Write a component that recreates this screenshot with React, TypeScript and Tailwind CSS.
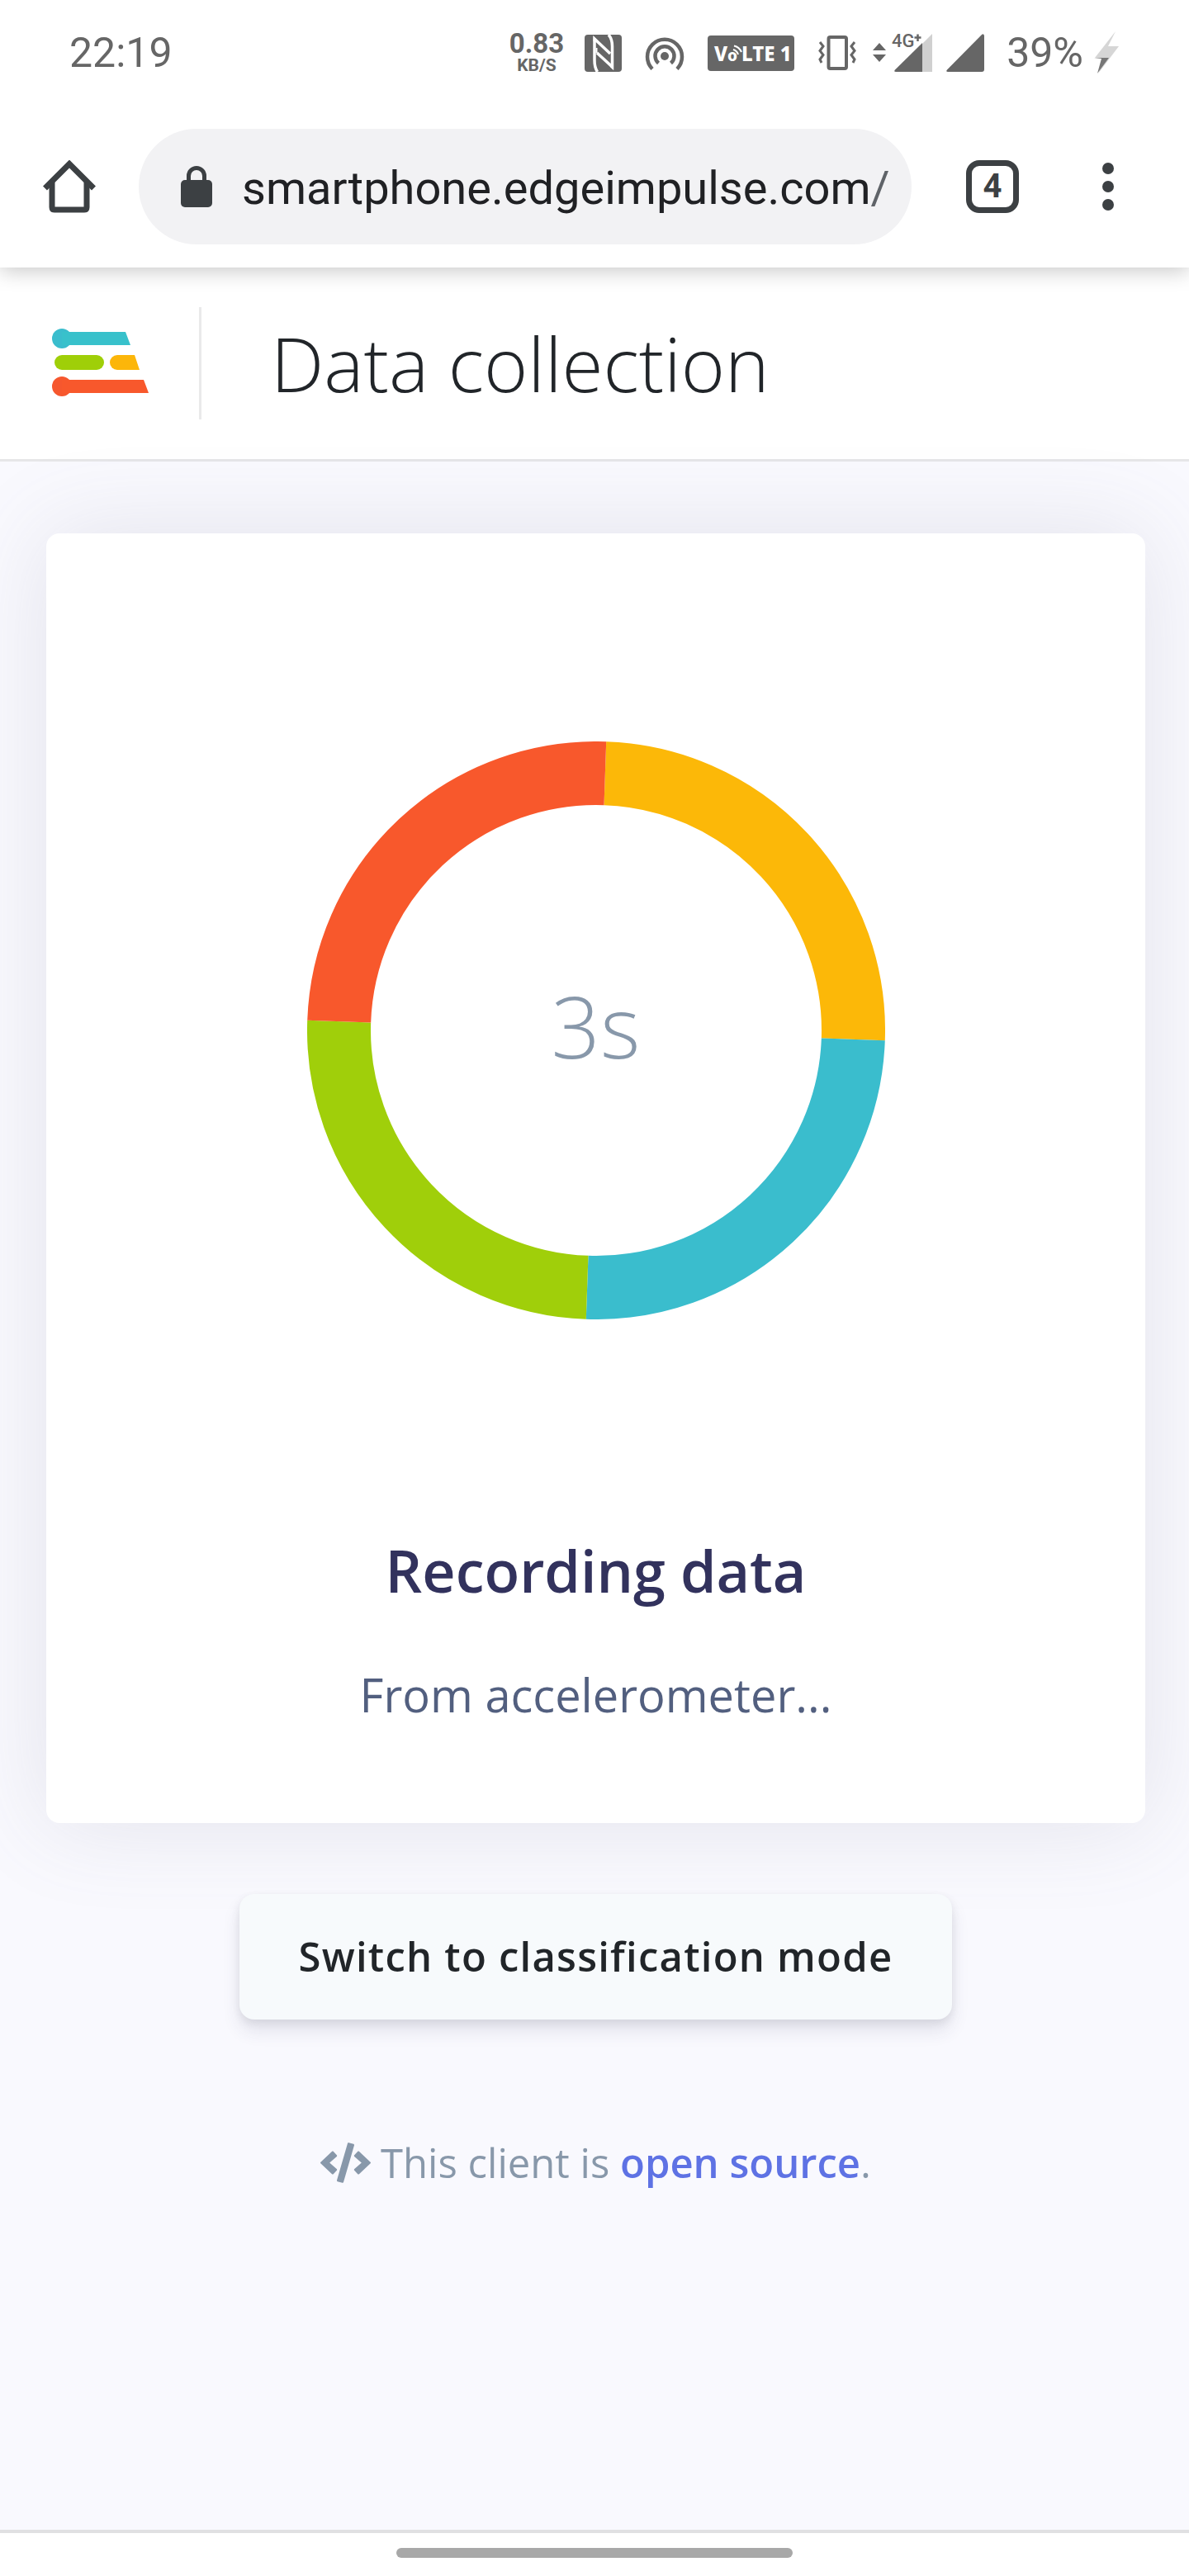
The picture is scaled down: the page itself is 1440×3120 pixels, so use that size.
import { FaCode } from "react-icons/fa";

const statusGray = "#666666";

function NfcIcon() {
  return (
    <svg viewBox="0 0 45 45" className="h-[45px] w-[45px]" aria-label="NFC">
      <rect width="45" height="45" rx="4" fill={statusGray} />
      <g fill="none" stroke="#fff" strokeWidth="3.500">
        <path d="M15.500 45 C12.800 41 12 37 12 31 V5 L31 23" />
        <path d="M29 0 C32.500 4 33.500 8 33.500 14 V39 L15 22" />
        <path d="M14.500 16 V22" strokeWidth="2" />
      </g>
      <path d="M11 2 L14 5 L12 8 L10.500 8 Z M35 43 L31 39 L34 36 Z" fill="#fff" />
    </svg>
  );
}

function HotspotIcon() {
  return (
    <svg viewBox="0 0 48 42" className="h-[42px] w-12" aria-label="Hotspot" fill="none" stroke={statusGray} strokeWidth="4.500">
      <circle cx="24" cy="25" r="5" fill={statusGray} stroke="none" />
      <path d="M16.500 33.500 A11.500 11.500 0 1 1 31.500 33.500" />
      <path d="M9 40.500 A21 21 0 1 1 39 40.500" />
    </svg>
  );
}

function VibrateIcon() {
  return (
    <svg viewBox="0 0 46 42" className="h-[42px] w-[46px]" aria-label="Vibrate" fill="none" stroke={statusGray}>
      <rect x="12.500" y="2" width="21.500" height="38" rx="2" strokeWidth="4" />
      <path d="M2 8 L6 13 L2 18.500 L6 23.500 L2 29 L4 33" strokeWidth="3" />
      <path d="M44 8 L40 13 L44 18.500 L40 23.500 L44 29 L42 33" strokeWidth="3" />
    </svg>
  );
}

function MobileDataIcon() {
  return (
    <svg viewBox="0 -6 73 60" className="h-[60px] w-[73px] overflow-visible" aria-label="4G+">
      <path d="M0 21 L8 12 L16 21 Z M0 26 L8 35 L16 26 Z" fill={statusGray} />
      <path d="M72 1 V47 H60 V13 Z" fill="#d0d0d0" />
      <path d="M60 12 V47 H28 Q25 47 27 44.500 Z" fill={statusGray} />
      <text x="23" y="17" fontFamily="Roboto" fontWeight="500" fontSize="22" fill={statusGray}>4G</text>
      <path d="M54.500 1.500 V10 M50.500 5.500 H58.500" stroke={statusGray} strokeWidth="2.500" />
    </svg>
  );
}

function SignalIcon() {
  return (
    <svg viewBox="0 0 46 46" className="h-[46px] w-[46px]" aria-label="Signal">
      <path d="M46 2 V43 Q46 46 43 46 H2 Q-1 46 1 43.500 L43 1 Q45 -1 46 2 Z" fill={statusGray} />
    </svg>
  );
}

function BoltIcon() {
  return (
    <svg viewBox="0 0 32 52" className="h-[52px] w-8" aria-label="Charging">
      <path d="M27 0 L2 32 H15 L6 51 L31 18 H18 Z" fill="#d6d6d6" />
      <path d="M1 32 H19 L5 51 L10 33 Z" fill="#777" />
    </svg>
  );
}

function VolteBadge() {
  return (
    <svg viewBox="0 0 106 44" className="h-11 w-[106px]" aria-label="VoLTE 1">
      <rect width="105" height="43" y="1" rx="4" fill={statusGray} />
      <g fontFamily="Noto Sans" fontWeight="800" fill="#fff">
        <text x="8" y="32" fontSize="24">V</text>
        <text x="24" y="32" fontSize="19">o</text>
        <text x="41" y="32" fontSize="24">LTE 1</text>
      </g>
      <g fill="none" stroke="#fff" strokeWidth="2">
        <path d="M31 18 A9 9 0 0 1 37 24" />
        <path d="M32 13.500 A13 13 0 0 1 41 21" />
      </g>
    </svg>
  );
}

function StatusBar() {
  return (
    <div className="flex h-32 items-center justify-between px-[84px] text-[50px] leading-none text-[#666666]">
      <span>22:19</span>
      <div className="flex items-center">
        <div className="flex flex-col items-center font-bold">
          <span className="text-[33px] leading-[30px]">0.83</span>
          <span className="text-[21px] leading-[22px]">KB/S</span>
        </div>
        <div className="ml-[25px] flex items-center gap-7">
          <NfcIcon />
          <HotspotIcon />
          <VolteBadge />
          <VibrateIcon />
        </div>
        <div className="ml-5 flex items-center gap-4">
          <MobileDataIcon />
          <SignalIcon />
        </div>
        <span className="ml-[27px]">39%</span>
        <span className="ml-3">
          <BoltIcon />
        </span>
      </div>
    </div>
  );
}

function BrowserBar() {
  return (
    <div className="flex h-[196px] items-center pl-[52px]">
      <button aria-label="Home">
        <svg viewBox="0 0 64 64" className="h-16 w-16" fill="none" stroke="#3c4043" strokeWidth="7">
          <path d="M2.500 34 L32 4.500 L61.500 34" />
          <path d="M11 27 V57 Q11 60 14 60 H50 Q53 60 53 57 V27" />
        </svg>
      </button>
      <label className="ml-[52px] flex h-[140px] min-w-0 flex-1 items-center rounded-full bg-[#f2f2f4] pl-[51px] text-[56px]">
        <svg viewBox="0 0 38 50" className="h-[50px] w-[38px] shrink-0" aria-hidden="true">
          <rect y="17" width="38" height="33" rx="5" fill="#3c4043" />
          <path d="M9.500 18 V12 A9.500 9.500 0 0 1 28.500 12 V18" fill="none" stroke="#3c4043" strokeWidth="5" />
        </svg>
        <input
          type="text"
          aria-label="Address"
          defaultValue="smartphone.edgeimpulse.com"
          className="ml-9 field-sizing-content pt-1 text-[#202124] outline-none"
        />
        <span className="pt-1 text-[#5f6368]">/</span>
      </label>
      <button
        aria-label="Open tabs"
        className="ml-[66px] flex h-16 w-16 items-center justify-center rounded-2xl border-[7px] border-[#3c4043] text-[40px] leading-none font-bold text-[#3c4043]"
      >
        4
      </button>
      <button aria-label="More options" className="mr-[91px] ml-[101px]">
        <svg viewBox="0 0 14 58" className="h-[58px] w-[14px]" fill="#3c4043">
          <circle cx="7" cy="7" r="7" />
          <circle cx="7" cy="29" r="7" />
          <circle cx="7" cy="51" r="7" />
        </svg>
      </button>
    </div>
  );
}

function Logo() {
  return (
    <svg viewBox="0 0 118 84" className="h-[84px] w-[118px]" aria-label="Edge Impulse">
      <circle cx="12" cy="12" r="12" fill="#3abdcd" />
      <path d="M12 4 H89 L95 20 H12 Z" fill="#38c1cb" />
      <rect x="3" y="32" width="60" height="18" rx="9" fill="#9fcf08" />
      <path d="M79 32 H100 L106 50 H79 A9 9 0 0 1 79 32 Z" fill="#fcb60a" />
      <circle cx="12" cy="70" r="12" fill="#f6572e" />
      <path d="M12 62 H111 L117 78 H12 Z" fill="#f8582c" />
    </svg>
  );
}

function ProgressRing() {
  return (
    <div className="grid place-items-center">
      <svg viewBox="-350 -350 700 700" className="col-start-1 row-start-1 w-[700px] max-w-full" aria-hidden="true">
        <g fill="none" strokeWidth="77" transform="rotate(2)">
          <path d="M0 -311.500 A311.500 311.500 0 0 1 311.500 0" stroke="#fcb808" />
          <path d="M311.500 0 A311.500 311.500 0 0 1 0 311.500" stroke="#3abdcd" />
          <path d="M0 311.500 A311.500 311.500 0 0 1 -311.500 0" stroke="#a0cf0a" />
          <path d="M-311.500 0 A311.500 311.500 0 0 1 0 -311.500" stroke="#f8582c" />
        </g>
      </svg>
      <span className="col-start-1 row-start-1 pb-3 text-[104px] leading-none font-light text-[#8898aa]">3s</span>
    </div>
  );
}

export default function App() {
  return (
    <div className="flex min-h-screen flex-col bg-[#f9f9fe] font-['Open_Sans',sans-serif]">
      <div className="relative z-10 bg-white font-['Roboto',sans-serif] shadow-[0_4px_24px_rgba(0,0,0,0.22)]">
        <StatusBar />
        <BrowserBar />
      </div>

      <header className="flex h-[235px] items-center border-b-[3px] border-[#e6e6e8] bg-white pl-[63px]">
        <Logo />
        <div className="ml-[60px] h-[136px] w-[3px] bg-[#e9e9ea]" />
        <h1 className="ml-[84px] text-[91px] leading-none font-light text-[#212529]">Data collection</h1>
      </header>

      <main className="flex flex-1 flex-col items-center pt-[87px] pr-[53px] pl-14">
        <section className="flex w-full flex-col items-center rounded-2xl bg-white pt-[252px] pb-[114px] shadow-[0_0_112px_rgba(110,115,135,0.16)]">
          <ProgressRing />
          <h2 className="mt-[254px] text-[70px] leading-[100px] font-semibold text-[#32325d]">Recording data</h2>
          <p className="mt-[58px] text-[56px] leading-[84px] text-[#525f7f]">From accelerometer...</p>
        </section>

        <button className="mt-[86px] h-[152px] rounded-[18px] bg-[#f7fafc] px-[72px] text-[49px] font-semibold tracking-wide text-[#212529] shadow-[0_14px_21px_rgba(50,50,93,0.11),0_4px_11px_rgba(0,0,0,0.08)]">
          Switch to classification mode
        </button>

        <p className="mt-[136px] flex items-center text-[49px] leading-[74px] text-[#8898aa]">
          <FaCode className="mr-3 h-[49px] w-[61px]" aria-hidden="true" />
          <span>
            This client is{" "}
            <a href="#source" className="font-semibold text-[#5e72e4]">
              open source
            </a>
            .
          </span>
        </p>
      </main>

      <footer className="flex h-14 items-start justify-center border-t-4 border-[#e0e0e2] bg-white pt-[18px]">
        <div className="h-3 w-1/3 rounded-full bg-[#a8a8a8]" />
      </footer>
    </div>
  );
}
